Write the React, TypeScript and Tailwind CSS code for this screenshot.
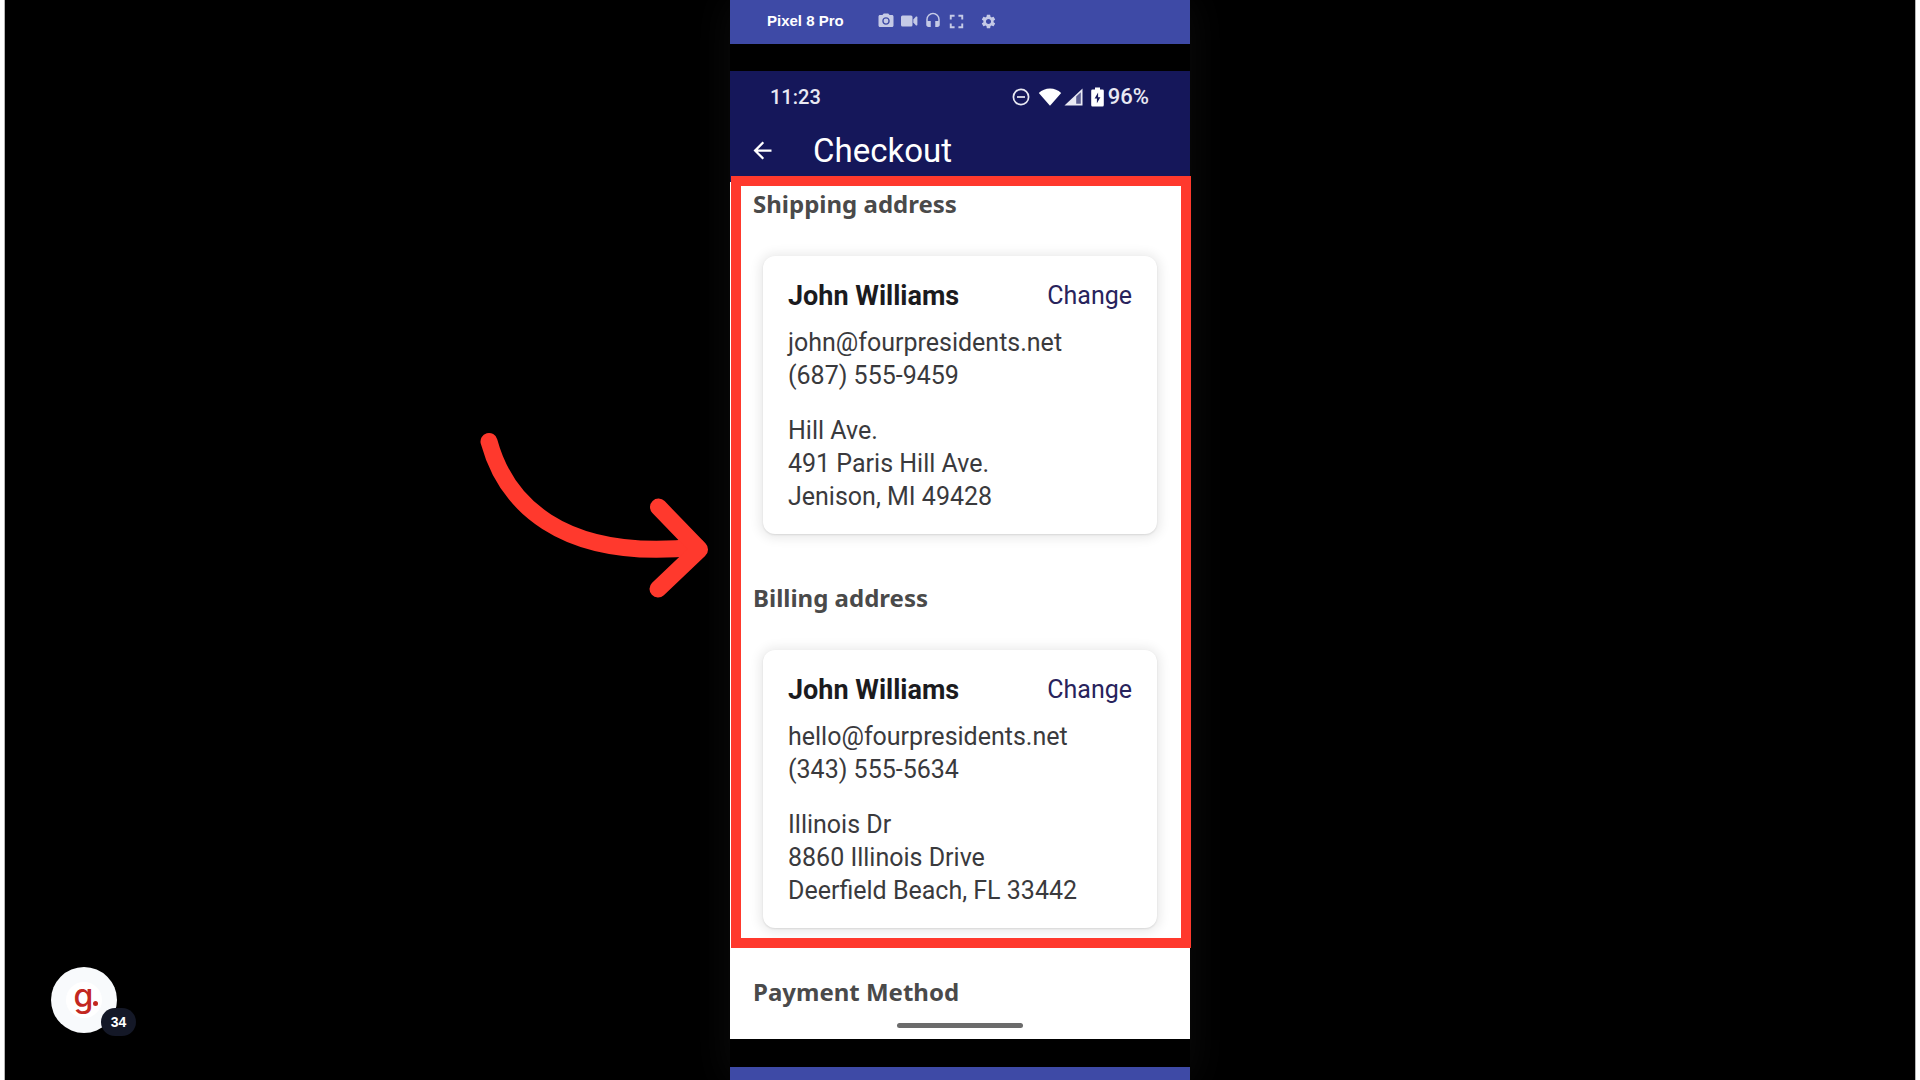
import { MdPhotoCamera, MdHeadset, MdSettings, MdFullscreen, MdArrowBack } from "react-icons/md";

type Address = {
  title: string;
  name: string;
  email: string;
  phone: string;
  lines: string[];
};

const addresses: Address[] = [
  {
    title: "Shipping address",
    name: "John Williams",
    email: "john@fourpresidents.net",
    phone: "(687) 555-9459",
    lines: ["Hill Ave.", "491 Paris Hill Ave.", "Jenison, MI 49428"],
  },
  {
    title: "Billing address",
    name: "John Williams",
    email: "hello@fourpresidents.net",
    phone: "(343) 555-5634",
    lines: ["Illinois Dr", "8860 Illinois Drive", "Deerfield Beach, FL 33442"],
  },
];

function VideoIcon() {
  return (
    <svg viewBox="0 0 17 12" className="h-3 w-[17px]" fill="currentColor" aria-hidden="true">
      <rect x="0" y="0.5" width="11.5" height="11" rx="1.5" />
      <path d="M12.3 4.5 15 1.6Q16.4 1 16.4 2.4V9.6Q16.4 11 15 10.4L12.3 7.5Z" />
    </svg>
  );
}

function DeviceBar() {
  return (
    <div className="flex h-11 items-center bg-[#3e4aa6] pl-[37px] pb-2.5 pt-2">
      <span className="w-[107px] font-['Liberation_Sans',sans-serif] text-[15px] font-bold leading-5 text-white">
        Pixel 8 Pro
      </span>
      <div className="flex items-center text-[#c5cae6]">
        <button type="button" aria-label="Screenshot" className="flex w-[23px] justify-center">
          <MdPhotoCamera size={18} />
        </button>
        <button type="button" aria-label="Record" className="flex w-6 justify-center">
          <VideoIcon />
        </button>
        <button type="button" aria-label="Audio" className="flex w-[23px] justify-center">
          <MdHeadset size={18} />
        </button>
        <button type="button" aria-label="Fullscreen" className="flex w-6 justify-center">
          <MdFullscreen size={23} />
        </button>
        <button type="button" aria-label="Settings" className="ml-[9px] flex w-[23px] justify-center">
          <MdSettings size={17} />
        </button>
      </div>
    </div>
  );
}

function StatusBar() {
  return (
    <div className="flex h-[50px] items-center justify-between pl-10 pr-[41px] pt-0.5 font-medium text-[#e9e9f3]">
      <span className="text-xl">11:23</span>
      <div className="flex items-center">
        <svg viewBox="0 0 18 18" className="mr-2 h-[18px] w-[18px]" fill="none" stroke="currentColor" strokeWidth="1.7" aria-hidden="true">
          <circle cx="9" cy="9" r="7.6" />
          <path d="M5 9H13" />
        </svg>
        <svg viewBox="0 0 24 18" className="mr-0.5 h-[18px] w-6" fill="#fff" aria-hidden="true">
          <path d="M0.8 5Q5.5 0.4 12 0.4T23.2 5L12 17.8Z" />
        </svg>
        <svg viewBox="0 0 19 18" className="mr-2 h-[18px] w-[19px]" aria-hidden="true">
          <path d="M0.5 17.5 18.5 0.5V17.5Z" fill="currentColor" />
          <path d="M12.2 8.4 16.8 4.2V15.7H12.2Z" fill="#5b5d91" />
        </svg>
        <svg viewBox="0 0 13 20" className="mr-1 h-5 w-[13px]" fill="#fff" aria-hidden="true">
          <path d="M4 0.5H9V2.5H11.5Q12.8 2.5 12.8 3.8V18Q12.8 19.5 11.5 19.5H1.5Q0.2 19.5 0.2 18V3.8Q0.2 2.5 1.5 2.5H4Z" />
          <path d="M7.1 5.5 3.6 11.6H5.9V16.3L9.4 10.2H7.1Z" fill="#15175a" />
        </svg>
        <span className="text-[22px] leading-7">96%</span>
      </div>
    </div>
  );
}

function AddressSection({ address }: { address: Address }) {
  return (
    <section className="pb-12">
      <h2 className="pl-[23px] font-['Noto_Sans',sans-serif] text-2xl font-bold leading-8 text-[#4a4a4a]">{address.title}</h2>
      <div className="ml-[33px] mr-[33px] mt-9 rounded-xl bg-white px-[25px] pb-[21px] pt-6 shadow-[0_1px_12px_3px_rgba(0,0,0,0.09),0_1px_2px_rgba(0,0,0,0.1)]">
        <div className="flex items-center justify-between leading-8">
          <h3 className="text-[27px] font-bold leading-8 text-[#1b1b1e]">{address.name}</h3>
          <button type="button" className="text-[25px] leading-8 text-[#28235c]">Change</button>
        </div>
        <div className="mt-[14px] text-[25px] leading-[33px] text-[#3a3a3d]">
          <p>{address.email}</p>
          <p>{address.phone}</p>
          <div className="mt-[22px]">
            {address.lines.map((line) => (
              <p key={line}>{line}</p>
            ))}
          </div>
        </div>
      </div>
    </section>
  );
}

function Phone() {
  return (
    <div className="mx-auto flex min-h-screen w-[460px] flex-col bg-black font-['Roboto',sans-serif] shadow-[0_0_40px_rgba(255,255,255,0.05)]">
      <DeviceBar />
      <header className="mt-[27px] bg-[#15175a]">
        <StatusBar />
        <div className="flex h-[61px] items-center pb-0.5 pl-[19px] text-white">
          <button type="button" aria-label="Back">
            <MdArrowBack size={27} />
          </button>
          <h1 className="ml-[37px] text-[33px] leading-10">Checkout</h1>
        </div>
      </header>
      <main className="bg-white">
        <div className="relative pt-1.5">
          {addresses.map((address) => (
            <AddressSection key={address.title} address={address} />
          ))}
          <div className="pointer-events-none absolute -right-px -top-1.5 bottom-7 left-px border-10 border-[#ff392d]" />
        </div>
        <h2 className="pl-[23px] font-['Noto_Sans',sans-serif] text-2xl font-bold leading-8 text-[#4a4a4a]">Payment Method</h2>
        <div className="mx-auto mb-[11px] mt-[15px] h-[5px] w-[126px] rounded-full bg-[#6b6b6b]" />
      </main>
      <div className="mt-7 flex-1 bg-[#3e4aa6]" />
    </div>
  );
}

export default function App() {
  return (
    <div className="bg-white px-1">
      <div className="relative min-h-screen border-x border-[#b5b5b5] bg-black">
        <Phone />
        <svg
          viewBox="480 430 230 170"
          className="absolute right-1/2 top-[430px] mr-[250px] h-[170px] w-[230px]"
          fill="none"
          stroke="#ff392d"
          strokeWidth="17"
          strokeLinecap="round"
          strokeLinejoin="round"
          aria-hidden="true"
        >
          <path d="M489 441.5C505 500 558 562 697 547" />
          <path d="M658.500 507 699.500 549.500 658 589" />
        </svg>
        <button
          type="button"
          aria-label="Open widget, 34 items"
          className="absolute bottom-[47px] left-[46px] flex size-[66px] items-center justify-center rounded-full bg-[#f8fafc]"
        >
          <span className="flex size-9 items-center justify-center rounded-full bg-white pb-2 pl-1 font-['Inter',sans-serif] text-[32px] font-medium leading-9 text-[#c3281f]">
            g
            <span className="mt-[15px] size-[5px] shrink-0 rounded-full bg-[#c3281f]" />
          </span>
          <span className="absolute -bottom-[3px] -right-[19px] flex h-7 w-[35px] items-center justify-center rounded-full bg-[#141827] font-['Liberation_Sans',sans-serif] text-sm font-bold text-white">
            34
          </span>
        </button>
      </div>
    </div>
  );
}
